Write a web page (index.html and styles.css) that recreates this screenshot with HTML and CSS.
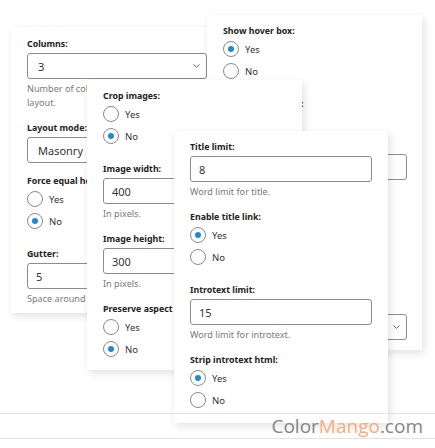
FILE: index.html
```html
<!DOCTYPE html>
<html lang="en">
<head>
    <meta charset="UTF-8">
    <meta name="viewport" content="width=device-width, initial-scale=1.0">
    <title>Module settings</title>
    <link rel="stylesheet" href="styles.css">
</head>
<body>
    <div class="canvas">
        <!-- grid settings -->
        <section class="card card-grid">
            <div class="field">
                <span class="field-label">Columns:</span>
                <div class="input select">3 <svg class="chevron" width="7" height="4" viewBox="0 0 7 4"><path d="M0.5 0.5 L3.5 3.3 L6.5 0.5" /></svg></div>
                <div class="help">Number of columns for the masonry grid layout.</div>
            </div>
            <div class="field">
                <span class="field-label">Layout mode:</span>
                <div class="input select">Masonry <svg class="chevron" width="7" height="4" viewBox="0 0 7 4"><path d="M0.5 0.5 L3.5 3.3 L6.5 0.5" /></svg></div>
            </div>
            <div class="radios">
                <span class="field-label">Force equal heights:</span>
                <div class="radio"><span class="radio-dot"></span>Yes</div>
                <div class="radio checked"><span class="radio-dot"></span>No</div>
            </div>
            <div class="field">
                <span class="field-label">Gutter:</span>
                <div class="input">5</div>
                <div class="help">Space around each item.</div>
            </div>
        </section>

        <!-- hover box settings -->
        <section class="card card-hover">
            <div class="radios">
                <span class="field-label">Show hover box:</span>
                <div class="radio checked"><span class="radio-dot"></span>Yes</div>
                <div class="radio"><span class="radio-dot"></span>No</div>
            </div>
            <div class="field">
                <span class="field-label">Hover box display:</span>
                <div class="help">Over the image.</div>
            </div>
            <div class="field">
                <span class="field-label">Hover box opacity:</span>
                <div class="input">80</div>
                <div class="help">In percent.</div>
            </div>
            <div class="radios">
                <span class="field-label">Show readmore:</span>
                <div class="radio checked"><span class="radio-dot"></span>Yes</div>
                <div class="radio"><span class="radio-dot"></span>No</div>
            </div>
            <div class="field field-bottom">
                <span class="field-label">Hover effect:</span>
                <div class="input select">Fade <svg class="chevron" width="7" height="4" viewBox="0 0 7 4"><path d="M0.5 0.5 L3.5 3.3 L6.5 0.5" /></svg></div>
            </div>
        </section>

        <!-- image settings -->
        <section class="card card-image">
            <div class="radios">
                <span class="field-label">Crop images:</span>
                <div class="radio"><span class="radio-dot"></span>Yes</div>
                <div class="radio checked"><span class="radio-dot"></span>No</div>
            </div>
            <div class="field">
                <span class="field-label">Image width:</span>
                <div class="input">400</div>
                <div class="help">In pixels.</div>
            </div>
            <div class="field">
                <span class="field-label">Image height:</span>
                <div class="input">300</div>
                <div class="help">In pixels.</div>
            </div>
            <div class="radios">
                <span class="field-label">Preserve aspect ratio:</span>
                <div class="radio"><span class="radio-dot"></span>Yes</div>
                <div class="radio checked"><span class="radio-dot"></span>No</div>
            </div>
        </section>

        <!-- text settings -->
        <section class="card card-text">
            <div class="field">
                <span class="field-label">Title limit:</span>
                <div class="input">8</div>
                <div class="help">Word limit for title.</div>
            </div>
            <div class="radios">
                <span class="field-label">Enable title link:</span>
                <div class="radio checked"><span class="radio-dot"></span>Yes</div>
                <div class="radio"><span class="radio-dot"></span>No</div>
            </div>
            <div class="field">
                <span class="field-label">Introtext limit:</span>
                <div class="input">15</div>
                <div class="help">Word limit for introtext.</div>
            </div>
            <div class="radios">
                <span class="field-label">Strip introtext html:</span>
                <div class="radio checked"><span class="radio-dot"></span>Yes</div>
                <div class="radio"><span class="radio-dot"></span>No</div>
            </div>
        </section>

        <div class="watermark"><span class="wm-color">Color</span><span class="wm-mango">Mango</span><span class="wm-color">.com</span></div>
    </div>
</body>
</html>
```

FILE: styles.css
```css
body {
    margin: 0;
    background: #ffffff;
    font-family: "Noto Sans", "Open Sans", sans-serif;
    color: #333;
}
.canvas {
    position: relative;
    width: 435px;
    height: 448px;
    overflow: hidden;
}
.card {
    position: absolute;
    box-sizing: border-box;
    display: flex;
    flex-direction: column;
    background: #ffffff;
    padding: 10px 16px;
    box-shadow: 2px 3px 8px rgba(0, 0, 0, 0.12);
}
.card-grid {
    left: 11px;
    top: 27px;
    width: 212px;
    height: 286px;
    padding-top: 11px;
}
.card-hover {
    left: 207px;
    top: 15px;
    width: 215px;
    height: 335px;
    padding-right: 15px;
}
.card-image {
    left: 87px;
    top: 80px;
    width: 215px;
    height: 290px;
}
.card-text {
    left: 174px;
    top: 131px;
    width: 214px;
    height: 292px;
}
.field-label {
    display: block;
    font-size: 8.8px;
    font-weight: 700;
    line-height: 12px;
    margin-bottom: 3px;
    color: #222;
    white-space: nowrap;
}
.field {
    margin-bottom: 12px;
}
.field-bottom {
    margin-top: auto;
    margin-bottom: 0;
}
.input {
    box-sizing: border-box;
    display: flex;
    align-items: center;
    height: 26px;
    padding: 0 8px;
    border: 1px solid #8c8c8c;
    border-radius: 3px;
    font-size: 11px;
    color: #333;
}
.select {
    justify-content: space-between;
    padding: 0 6px 0 10px;
}
.chevron {
    fill: none;
    stroke: #666;
    stroke-width: 1;
}
.help {
    margin-top: 3px;
    font-size: 9.1px;
    line-height: 14px;
    color: #7a7a7a;
}
.radios {
    margin-bottom: 16px;
}
.radios .field-label {
    margin-bottom: 1px;
}
.radio {
    display: flex;
    align-items: center;
    gap: 6px;
    height: 22px;
    font-size: 9.5px;
    color: #333;
}
.radio-dot {
    box-sizing: border-box;
    display: flex;
    align-items: center;
    justify-content: center;
    width: 16px;
    height: 16px;
    border: 1px solid #8a8a8a;
    border-radius: 50%;
}
.radio.checked .radio-dot::after {
    content: "";
    width: 6px;
    height: 6px;
    border-radius: 50%;
    background: #2189cc;
}
.watermark {
    position: absolute;
    left: 0;
    right: 0;
    top: 413px;
    height: 26px;
    box-sizing: border-box;
    border-top: 1px solid #e2e2e2;
    border-bottom: 1px solid #e2e2e2;
    padding-right: 12px;
    text-align: right;
    font-family: "Open Sans", sans-serif;
    font-size: 19px;
    line-height: 24px;
}
.wm-color {
    color: #858585;
}
.wm-mango {
    color: #f6ae7c;
}
```
